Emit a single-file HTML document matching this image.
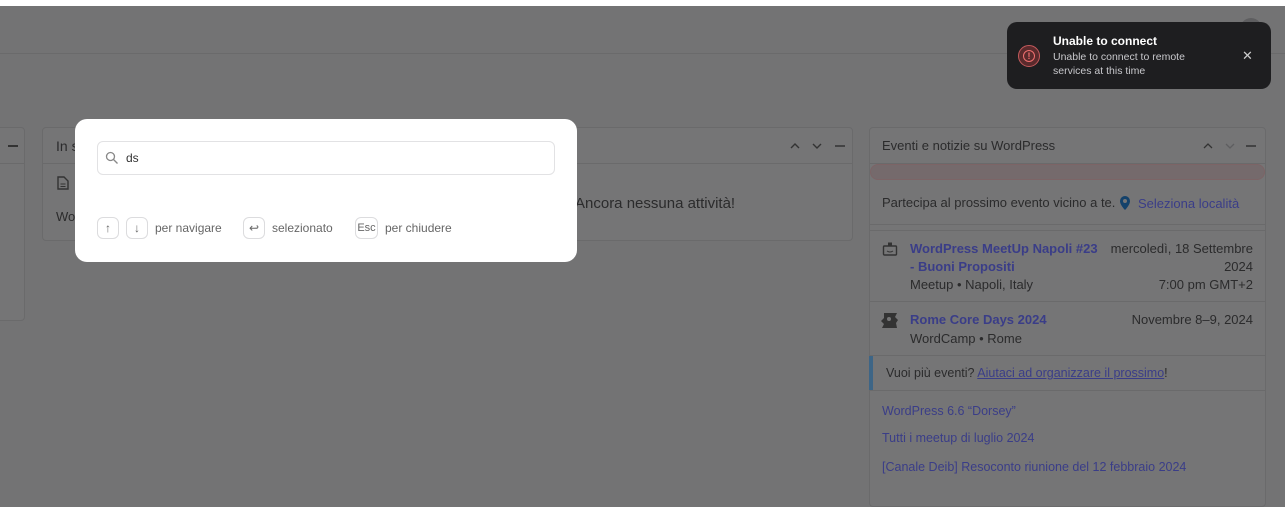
<!DOCTYPE html>
<html><head><meta charset="utf-8"><style>
*{box-sizing:border-box;margin:0;padding:0}
body{width:1285px;height:496px;overflow:hidden;background:#737374;font-family:"Liberation Sans",sans-serif;position:relative;color:#2b2b2c}
.abs{position:absolute}
.panel{position:absolute;border:1px solid #6a6a6b;border-radius:4px;background:#757576}
.t{position:absolute;white-space:nowrap;font-size:13px}
.lk{color:#3a3d88}
</style></head><body>
<div class="abs" style="left:0;top:0;width:1285px;height:6px;background:#fff"></div>
<div class="abs" style="left:0;top:53px;width:1285px;height:1px;background:#6a6a6b"></div>
<div class="abs" style="left:1240px;top:18px;width:22px;height:22px;border-radius:50%;background:#5e5e60"></div>

<div class="panel" style="left:-5px;top:127px;width:30px;height:194px"></div>
<div class="abs" style="left:8px;top:145px;width:10px;height:1.5px;background:#333"></div>
<div class="abs" style="left:-5px;top:163px;width:30px;height:1px;background:#6a6a6b"></div>

<div class="panel" style="left:42px;top:127px;width:811px;height:114px"></div>
<div class="abs" style="left:42px;top:163px;width:811px;height:1px;background:#6a6a6b"></div>
<div class="t" style="left:56px;top:138px;font-size:14px">In s</div>
<svg class="abs" style="left:57px;top:176px" width="12" height="14" viewBox="0 0 12 14"><path d="M1 1h6l4 4v8H1z" fill="none" stroke="#333" stroke-width="1.4"/><path d="M3.5 8h5M3.5 10.5h5" stroke="#333"/></svg>
<div class="t" style="left:56px;top:209px">Wo</div>
<div class="t" style="left:575px;top:195px;font-size:15px">Ancora nessuna attività!</div>
<svg class="abs" style="left:789px;top:141px" width="60" height="10" viewBox="0 0 60 10"><path d="M2 7l4-4 4 4M24 3l4 4 4-4" fill="none" stroke="#333" stroke-width="1.4"/><path d="M46 5h10" stroke="#333" stroke-width="1.5"/></svg>

<div class="panel" style="left:869px;top:127px;width:397px;height:380px"></div>
<div class="abs" style="left:869px;top:163px;width:397px;height:1px;background:#6a6a6b"></div>
<div class="abs" style="left:870px;top:164px;width:395px;height:16px;background:#756a6c;border:1px solid #7c6466;border-radius:8px"></div>
<div class="t" style="left:882px;top:138px;font-size:13px">Eventi e notizie su WordPress</div>
<svg class="abs" style="left:1202px;top:141px" width="60" height="10" viewBox="0 0 60 10"><path d="M2 7l4-4 4 4" fill="none" stroke="#333" stroke-width="1.3"/><path d="M24 3l4 4 4-4" fill="none" stroke="#5e5e60" stroke-width="1.3"/><path d="M44 5h10" stroke="#333" stroke-width="1.5"/></svg>
<div class="t" style="left:882px;top:195px">Partecipa al prossimo evento vicino a te.</div>
<svg class="abs" style="left:1118px;top:195px" width="14" height="16" viewBox="0 0 14 16"><path d="M7 1a5 5 0 0 0-5 5c0 4 5 9 5 9s5-5 5-9a5 5 0 0 0-5-5z" fill="#14426b"/><circle cx="7" cy="6" r="2" fill="#757576"/></svg>
<div class="t lk" style="left:1138px;top:196px">Seleziona località</div>
<div class="abs" style="left:869px;top:224px;width:397px;height:1px;background:#6a6a6b"></div>
<div class="abs" style="left:869px;top:230px;width:397px;height:1px;background:#6a6a6b"></div>
<svg class="abs" style="left:882px;top:241px" width="16" height="16" viewBox="0 0 16 16"><rect x="1.5" y="5" width="13" height="9" rx="1" fill="none" stroke="#333" stroke-width="1.4"/><rect x="6" y="1.5" width="4" height="3.5" fill="#333"/><path d="M5 10q3 2 6 0" fill="none" stroke="#333"/></svg>
<div class="t lk" style="left:910px;top:241px;font-weight:bold">WordPress MeetUp Napoli #23</div>
<div class="t lk" style="left:910px;top:259px;font-weight:bold">- Buoni Propositi</div>
<div class="t" style="left:910px;top:277px">Meetup • Napoli, Italy</div>
<div class="t" style="right:32px;top:241px">mercoledì, 18 Settembre</div>
<div class="t" style="right:32px;top:259px">2024</div>
<div class="t" style="right:32px;top:277px">7:00 pm GMT+2</div>
<div class="abs" style="left:869px;top:301px;width:397px;height:1px;background:#6a6a6b"></div>
<svg class="abs" style="left:880px;top:311px" width="20" height="19" viewBox="0 0 20 19"><path d="M4 2h13l-2 4 3 3-2 3 1 5H2l2-4-3-3 3-3z" fill="#333"/><circle cx="9" cy="8" r="2" fill="#757576"/></svg>
<div class="t lk" style="left:910px;top:312px;font-weight:bold">Rome Core Days 2024</div>
<div class="t" style="left:910px;top:331px">WordCamp • Rome</div>
<div class="t" style="right:32px;top:312px">Novembre 8–9, 2024</div>
<div class="abs" style="left:869px;top:355px;width:397px;height:1px;background:#6a6a6b"></div>
<div class="abs" style="left:869px;top:356px;width:4px;height:34px;background:#3d6586"></div>
<div class="t" style="left:886px;top:366px;font-size:12.5px">Vuoi più eventi? <span class="lk" style="text-decoration:underline">Aiutaci ad organizzare il prossimo</span>!</div>
<div class="abs" style="left:869px;top:390px;width:397px;height:1px;background:#6a6a6b"></div>
<div class="t lk" style="left:882px;top:404px;font-size:12.5px">WordPress 6.6 “Dorsey”</div>
<div class="t lk" style="left:882px;top:431px;font-size:12.5px">Tutti i meetup di luglio 2024</div>
<div class="t lk" style="left:882px;top:460px;font-size:12.5px">[Canale Deib] Resoconto riunione del 12 febbraio 2024</div>

<!-- modal -->
<div class="abs" style="left:75px;top:119px;width:502px;height:143px;background:#fff;border-radius:12px"></div>
<div class="abs" style="left:97px;top:141px;width:458px;height:34px;border:1px solid #e2e2e4;border-radius:6px"></div>
<svg class="abs" style="left:105px;top:151px" width="14" height="14" viewBox="0 0 14 14"><circle cx="5.5" cy="5.5" r="4" fill="none" stroke="#888" stroke-width="1.3"/><path d="M8.5 8.5l4 4" stroke="#888" stroke-width="1.3"/></svg>
<div class="t" style="left:126px;top:151px;font-size:12px;color:#333">ds</div>
<div class="abs" style="left:97px;top:217px;width:22px;height:22px;border:1px solid #dcdcde;border-radius:6px;font-size:12px;color:#666;text-align:center;line-height:20px">↑</div>
<div class="abs" style="left:126px;top:217px;width:22px;height:22px;border:1px solid #dcdcde;border-radius:6px;font-size:12px;color:#666;text-align:center;line-height:20px">↓</div>
<div class="t" style="left:155px;top:221px;font-size:12px;color:#666">per navigare</div>
<div class="abs" style="left:243px;top:217px;width:22px;height:22px;border:1px solid #dcdcde;border-radius:6px;font-size:12px;color:#666;text-align:center;line-height:20px">↩</div>
<div class="t" style="left:272px;top:221px;font-size:12px;color:#666">selezionato</div>
<div class="abs" style="left:355px;top:217px;width:23px;height:22px;border:1px solid #dcdcde;border-radius:6px;font-size:11px;color:#666;text-align:center;line-height:20px">Esc</div>
<div class="t" style="left:385px;top:221px;font-size:12px;color:#666">per chiudere</div>

<!-- toast -->
<div class="abs" style="left:1007px;top:22px;width:264px;height:67px;background:#1e1e20;border-radius:10px"></div>
<div class="abs" style="left:1018px;top:45px;width:22px;height:22px;border-radius:50%;background:#5a2a2c;border:1px solid #c45a5c"></div>
<div class="abs" style="left:1023px;top:50px;width:12px;height:12px;border-radius:50%;border:1.3px solid #f07070;color:#f07070;font-size:9px;line-height:10px;text-align:center;font-weight:bold">!</div>
<div class="t" style="left:1053px;top:34px;font-size:12px;font-weight:bold;color:#fff">Unable to connect</div>
<div class="t" style="left:1053px;top:51px;font-size:10.5px;color:#c8c8cc">Unable to connect to remote</div>
<div class="t" style="left:1053px;top:65px;font-size:10.5px;color:#c8c8cc">services at this time</div>
<div class="t" style="left:1242px;top:48px;font-size:13px;color:#ccc">✕</div>
</body></html>
